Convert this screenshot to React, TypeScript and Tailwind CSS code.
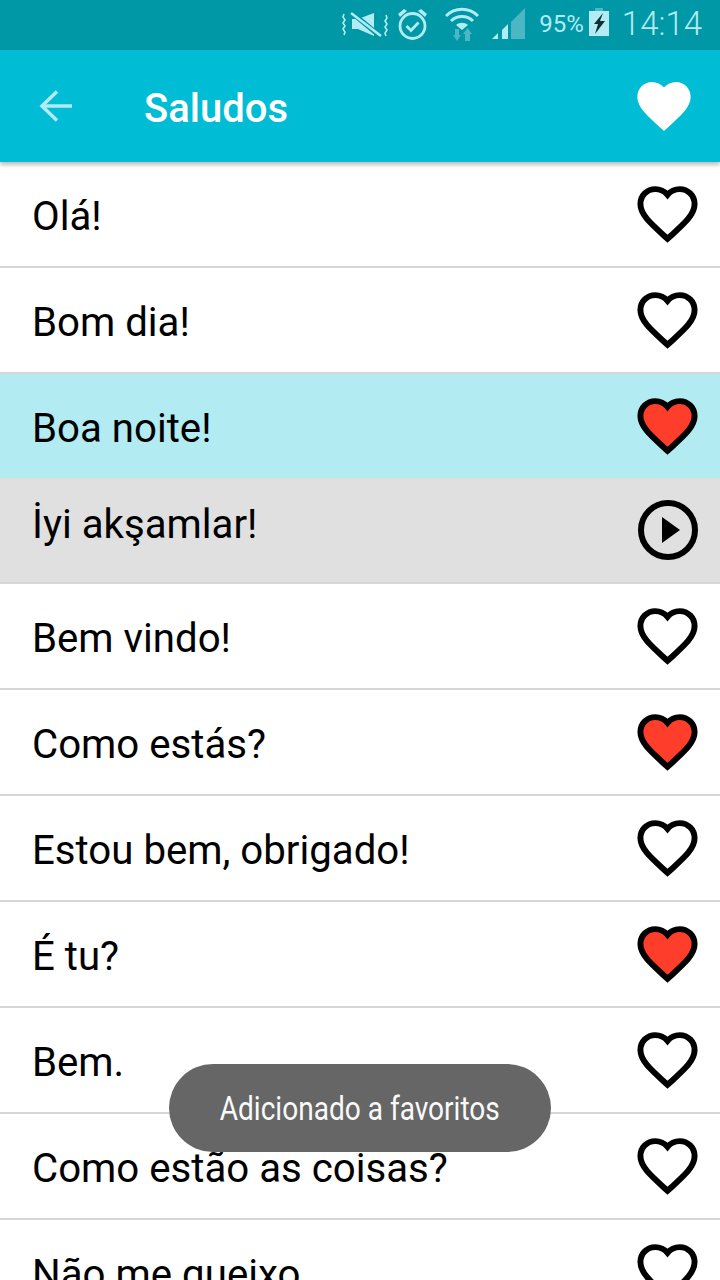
import React from 'react';

const HEART = 'M12 21.35l-1.45-1.32C5.4 15.36 2 12.28 2 8.5 2 5.42 4.42 3 7.5 3c1.74 0 3.41.81 4.5 2.09C13.09 3.81 14.76 3 16.5 3 19.58 3 22 5.42 22 8.5c0 3.78-3.4 6.86-8.55 11.54L12 21.35z';

const rows = [
  { text: 'Olá!', state: 'empty' },
  { text: 'Bom dia!', state: 'empty' },
  { text: 'Boa noite!', state: 'full', bg: 'bg-[#b2ebf2]', noBorder: true },
  { text: 'İyi akşamlar!', state: 'play', bg: 'bg-[#e0e0e0]', lift: true },
  { text: 'Bem vindo!', state: 'empty' },
  { text: 'Como estás?', state: 'full' },
  { text: 'Estou bem, obrigado!', state: 'empty' },
  { text: 'É tu?', state: 'full' },
  { text: 'Bem.', state: 'empty' },
  { text: 'Como estão as coisas?', state: 'empty' },
  { text: 'Não me queixo.', state: 'empty' },
];

const RowIcon = ({ state }: { state: string }) => {
  if (state === 'play') {
    return (
      <svg width="60" height="60" viewBox="0 0 60 60">
        <circle cx="30" cy="30" r="27" fill="none" stroke="#000" strokeWidth="6" />
        <path d="M24 17 L42 30 L24 43 Z" fill="#000" />
      </svg>
    );
  }
  return (
    <svg width="65" height="65" viewBox="0 0 24 24" className="mb-[1px]">
      <path d={HEART} fill={state === 'full' ? '#ff3d2b' : 'none'} stroke="#000" strokeWidth="2.2" />
    </svg>
  );
};

const StatusIcons = () => (
  <>
    {/* vibrate / mute */}
    <svg width="46" height="26" viewBox="0 0 46 26" className="mr-[9px]" fill="none" stroke="#b2ebf2">
      <path d="M2 3l-1 3 2 3-2 3 2 3-2 3 2 3-1 3" strokeWidth="1.6" />
      <path d="M44 4l1 3-2 3 2 3-2 3 2 3-2 3 1 3" strokeWidth="1.6" />
      <path d="M10 8h6l16-6v23l-16-7h-6z" fill="#b2ebf2" stroke="none" />
      <path d="M9 1l30 25" stroke="#0097a7" strokeWidth="5" />
      <path d="M9 2l30 23" strokeWidth="2.5" />
    </svg>
    {/* alarm */}
    <svg width="31" height="32" viewBox="0 0 31 32" className="mr-[17px]" fill="none" stroke="#b2ebf2">
      <circle cx="15.500" cy="18" r="12.500" strokeWidth="2.800" />
      <path d="M9.500 18l4.500 4.500 7.500-8" strokeWidth="2.800" />
      <path d="M1 6l6-5 3 2-7 6z" fill="#b2ebf2" stroke="none" />
      <path d="M30 6l-6-5-3 2 7 6z" fill="#b2ebf2" stroke="none" />
    </svg>
    {/* wifi with data arrows */}
    <svg width="34" height="34" viewBox="0 0 34 34" className="mr-[13px]" fill="none">
      <path d="M1 9C10 0 24 0 33 9" stroke="#b2ebf2" strokeWidth="3" />
      <path d="M6 14C12 8 22 8 28 14" stroke="#b2ebf2" strokeWidth="3" />
      <path d="M11 18c3.500-3 8.500-3 12 0l-6 5z" fill="#b2ebf2" />
      <path d="M10 22v6H8l4 6 4-6h-2v-6z" fill="#4db6c4" />
      <path d="M20 34v-7h-2l4.500-6 4.500 6h-2v7z" fill="#4db6c4" />
    </svg>
    {/* signal */}
    <svg width="33" height="31" viewBox="0 0 33 31" className="mr-[14px]">
      <path d="M19 14L33 0v31H19z" fill="#4db6c4" />
      <path d="M10 22l6-6v15h-6z" fill="#b2ebf2" />
      <path d="M0 31l6-6v6z" fill="#b2ebf2" />
    </svg>
    <span className="mr-[5px] text-[24px] text-[#b2ebf2]">95%</span>
    {/* battery */}
    <svg width="20" height="28" viewBox="0 0 20 28" className="mb-[4px] mr-[13px]">
      <path d="M6 0h8v3H6z" fill="#4db6c4" />
      <path d="M0 3h20v25H0z" fill="#b2ebf2" />
      <path d="M14 5L5 16h4l-3 10 10-13h-5l3-8z" fill="#103038" />
    </svg>
    <span className="text-[33px] font-light text-[#b2ebf2]">14:14</span>
  </>
);

export default function App() {
  return (
    <div className="relative flex h-[1280px] w-[720px] flex-col overflow-hidden bg-white font-['Roboto',sans-serif]">
      <div className="flex h-[50px] shrink-0 items-center justify-end bg-[#0097a7] pb-[3px] pr-[18px]">
        <StatusIcons />
      </div>

      <header className="relative z-10 flex h-[112px] shrink-0 items-center bg-[#00bcd4] shadow-[0_3px_4px_rgba(0,0,0,0.25)]">
        <svg width="34" height="32" viewBox="0 0 34 32" className="ml-[39px]" fill="none" stroke="#b2ebf2" strokeWidth="3.5">
          <path d="M33 16H3" />
          <path d="M18 1.500L3 16l15 14.500" />
        </svg>
        <h1 className="ml-[71px] mt-[6px] text-[40px] font-medium text-white">Saludos</h1>
        <svg width="64" height="64" viewBox="0 0 24 24" className="ml-auto mr-[24px]">
          <path d={HEART} fill="#fff" />
        </svg>
      </header>

      <ul className="flex flex-col">
        {rows.map((row) => (
          <li
            key={row.text}
            className={`flex shrink-0 items-center justify-between pl-[32px] pr-[20px] ${row.noBorder ? 'h-[104px]' : 'h-[106px] border-b-2 border-[#d6d6d6]'} ${row.bg ?? ''}`}
          >
            <span className={`text-[40.2px] text-black ${row.lift ? 'mb-[10px]' : 'mt-[6px]'}`}>{row.text}</span>
            <span className="flex w-[65px] shrink-0 items-center justify-center">
              <RowIcon state={row.state} />
            </span>
          </li>
        ))}
      </ul>

      <div className="absolute left-[169px] top-[1064px] flex h-[88px] w-[382px] items-center justify-center rounded-[44px] bg-[#666666]">
        <span className="mt-[1px] whitespace-nowrap text-[34px] text-[#fafafa] scale-x-[0.825]">Adicionado a favoritos</span>
      </div>
    </div>
  );
}
